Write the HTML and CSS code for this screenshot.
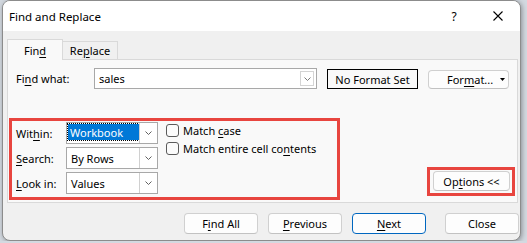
FILE: index.html
```html
<!DOCTYPE html>
<html lang="en">
<head>
    <meta charset="UTF-8">
    <title>Find and Replace</title>
    <link rel="stylesheet" href="styles.css">
</head>
<body>
    <section class="window">
        <div class="titlebar">
            <span class="title">Find and Replace</span>
            <div class="caption">
                <span class="cap-btn">?</span>
                <span class="cap-btn">
                    <svg width="10" height="10" viewBox="0 0 10 10"><path d="M0.5 0.5L9.5 9.5M9.5 0.5L0.5 9.5" stroke="#000" stroke-width="1.1" fill="none"/></svg>
                </span>
            </div>
        </div>

        <div class="content">
            <div class="tabs">
                <div class="tab active"><span>Fin<u>d</u></span></div>
                <div class="tab"><span>Re<u>p</u>lace</span></div>
            </div>

            <div class="panel">
                <div class="find-row">
                    <label class="label find-label">Fi<u>n</u>d what:</label>
                    <div class="combo find-combo">
                        <span class="value">sales</span>
                        <span class="inset-drop">
                            <svg width="7" height="4" viewBox="0 0 7 4"><polyline points="0.5,0.5 3.5,3.5 6.5,0.5" stroke="#7a7a7a" fill="none"/></svg>
                        </span>
                    </div>
                    <div class="format-preview">No Format Set</div>
                    <div class="btn format-btn">
                        <span>For<u>m</u>at...</span>
                        <svg width="5" height="3" viewBox="0 0 5 3"><polygon points="0,0 5,0 2.5,3" fill="#000"/></svg>
                    </div>
                </div>

                <div class="options-row">
                    <div class="mark search-box">
                        <div class="selects">
                            <div class="field">
                                <label class="label">Wit<u>h</u>in:</label>
                                <div class="combo select">
                                    <span class="value"><span class="selected">Workbook</span></span>
                                    <span class="drop">
                                        <svg width="7" height="4" viewBox="0 0 7 4"><polyline points="0.5,0.5 3.5,3.5 6.5,0.5" stroke="#606060" fill="none"/></svg>
                                    </span>
                                </div>
                            </div>
                            <div class="field">
                                <label class="label"><u>S</u>earch:</label>
                                <div class="combo select">
                                    <span class="value">By Rows</span>
                                    <span class="drop">
                                        <svg width="7" height="4" viewBox="0 0 7 4"><polyline points="0.5,0.5 3.5,3.5 6.5,0.5" stroke="#606060" fill="none"/></svg>
                                    </span>
                                </div>
                            </div>
                            <div class="field">
                                <label class="label"><u>L</u>ook in:</label>
                                <div class="combo select">
                                    <span class="value">Values</span>
                                    <span class="drop">
                                        <svg width="7" height="4" viewBox="0 0 7 4"><polyline points="0.5,0.5 3.5,3.5 6.5,0.5" stroke="#606060" fill="none"/></svg>
                                    </span>
                                </div>
                            </div>
                        </div>

                        <div class="checks">
                            <div class="check"><span class="box"></span><span>Match <u>c</u>ase</span></div>
                            <div class="check"><span class="box"></span><span>Match entire cell co<u>n</u>tents</span></div>
                        </div>
                    </div>

                    <div class="mark options-box">
                        <div class="btn options-btn"><span>Op<u>t</u>ions &lt;&lt;</span></div>
                    </div>
                </div>
            </div>

            <div class="actions">
                <div class="btn"><span>F<u>i</u>nd All</span></div>
                <div class="btn"><span><u>P</u>revious</span></div>
                <div class="btn default"><span><u>N</u>ext</span></div>
                <div class="btn close"><span>Close</span></div>
            </div>
        </div>
    </section>
</body>
</html>
```

FILE: styles.css
```css
*{
    box-sizing: border-box;
}

body{
    margin: 0;
    background-color: #d3d9e0;
    font-family: "Noto Sans", "Open Sans", sans-serif;
    font-size: 11px;
    color: #000;
}

u{
    text-decoration-thickness: 1px;
    text-underline-offset: 2px;
}

.window{
    margin-left: 2px;
    width: 519px;
    height: 241px;
    background-color: #f0f0f0;
    border: 1px solid #8c8c8c;
    border-radius: 8px;
    box-shadow: 1px 1px 5px rgba(0,0,0,0.35);
    overflow: hidden;
    display: flex;
    flex-direction: column;
}

.titlebar{
    height: 30px;
    background-color: #fff;
    display: flex;
    align-items: center;
    justify-content: space-between;
    padding-left: 6px;
}

.title{
    font-size: 11.5px;
}

.caption{
    display: flex;
    height: 100%;
}

.cap-btn{
    width: 44px;
    display: flex;
    align-items: center;
    justify-content: center;
    font-size: 12px;
}

.content{
    padding: 8px 2px 0 4px;
}

/* Tabs */
.tabs{
    display: flex;
    align-items: flex-end;
    height: 20px;
    position: relative;
    z-index: 1;
}

.tab{
    width: 56px;
    height: 18px;
    border: 1px solid #d9d9d9;
    border-bottom: none;
    background-color: #f0f0f0;
    display: flex;
    align-items: center;
    justify-content: center;
}

.tab + .tab{
    margin-left: -1px;
}

.tab.active{
    height: 21px;
    margin-bottom: -1px;
    background-color: #f9f9f9;
    z-index: 2;
}

.panel{
    width: 511px;
    height: 144px;
    border: 1px solid #d9d9d9;
    background-color: #f9f9f9;
    padding: 8px 0 2px 0;
}

/* Find what row */
.find-row{
    display: flex;
    align-items: flex-start;
    padding-left: 8px;
    height: 21px;
}

.find-label{
    width: 78px;
    line-height: 21px;
}

.combo{
    display: flex;
    background-color: #fff;
    border: 1px solid #a8a8a8;
}

.combo .value{
    flex: 1;
    display: flex;
    align-items: center;
    padding-left: 4px;
}

.find-combo{
    width: 223px;
    height: 21px;
    padding: 2px;
}

.find-combo .value{
    padding-left: 2px;
}

.inset-drop{
    width: 14px;
    border: 1px solid #d4d4d4;
    display: flex;
    align-items: center;
    justify-content: center;
}

.format-preview{
    margin: 1px 0 0 10px;
    width: 91px;
    height: 20px;
    border: 1px solid #000;
    display: flex;
    align-items: center;
    justify-content: center;
}

.btn{
    background-color: #fdfdfd;
    border: 1px solid #d0d0d0;
    border-bottom-color: #c2c2c2;
    border-radius: 4px;
    display: flex;
    align-items: center;
    justify-content: center;
}

.format-btn{
    margin: 2px 0 0 10px;
    width: 81px;
    height: 19px;
    justify-content: space-between;
    padding: 0 3px 0 18px;
}

/* Within / Search / Look in */
.options-row{
    display: flex;
    justify-content: space-between;
    align-items: flex-end;
    margin-top: 29px;
    padding: 0 2px 0 1px;
}

.mark{
    border: 3px solid #e8453f;
}

.search-box{
    width: 331px;
    height: 82px;
    padding: 1px 0 0 4px;
    display: flex;
    gap: 8px;
}

.selects{
    display: flex;
    flex-direction: column;
    gap: 3px;
}

.field{
    display: flex;
    align-items: center;
}

.field .label{
    width: 50px;
}

.select{
    width: 92px;
    height: 22px;
}

.select .value{
    padding-left: 4px;
}

.select .value .selected{
    flex: 1;
    align-self: stretch;
    margin: 1px 0 3px -3px;
    padding-left: 2px;
    background-color: #0078d7;
    color: #fff;
    outline: 1px dotted #000;
    display: flex;
    align-items: center;
}

.drop{
    width: 18px;
    border-left: 1px solid #d0d0d0;
    display: flex;
    align-items: center;
    justify-content: center;
}

.checks{
    display: flex;
    flex-direction: column;
    gap: 5px;
    padding-top: 2px;
}

.check{
    display: flex;
    align-items: center;
    gap: 4px;
    height: 13px;
}

.box{
    width: 13px;
    height: 13px;
    border: 1px solid #5a5a5a;
    border-radius: 3px;
    background-color: #fbfbfb;
}

.options-box{
    width: 88px;
    height: 29px;
    margin-bottom: 4px;
    padding: 1px 1px 1px 3px;
}

.options-btn{
    width: 77px;
    height: 20px;
}

/* Bottom buttons */
.actions{
    display: flex;
    justify-content: flex-end;
    gap: 10px;
    margin: 10px -1px 0 0;
}

.actions .btn{
    width: 74px;
    height: 21px;
}

.actions .default{
    border-color: #0067c0;
}

.actions .close{
    margin-left: 9px;
}
```
